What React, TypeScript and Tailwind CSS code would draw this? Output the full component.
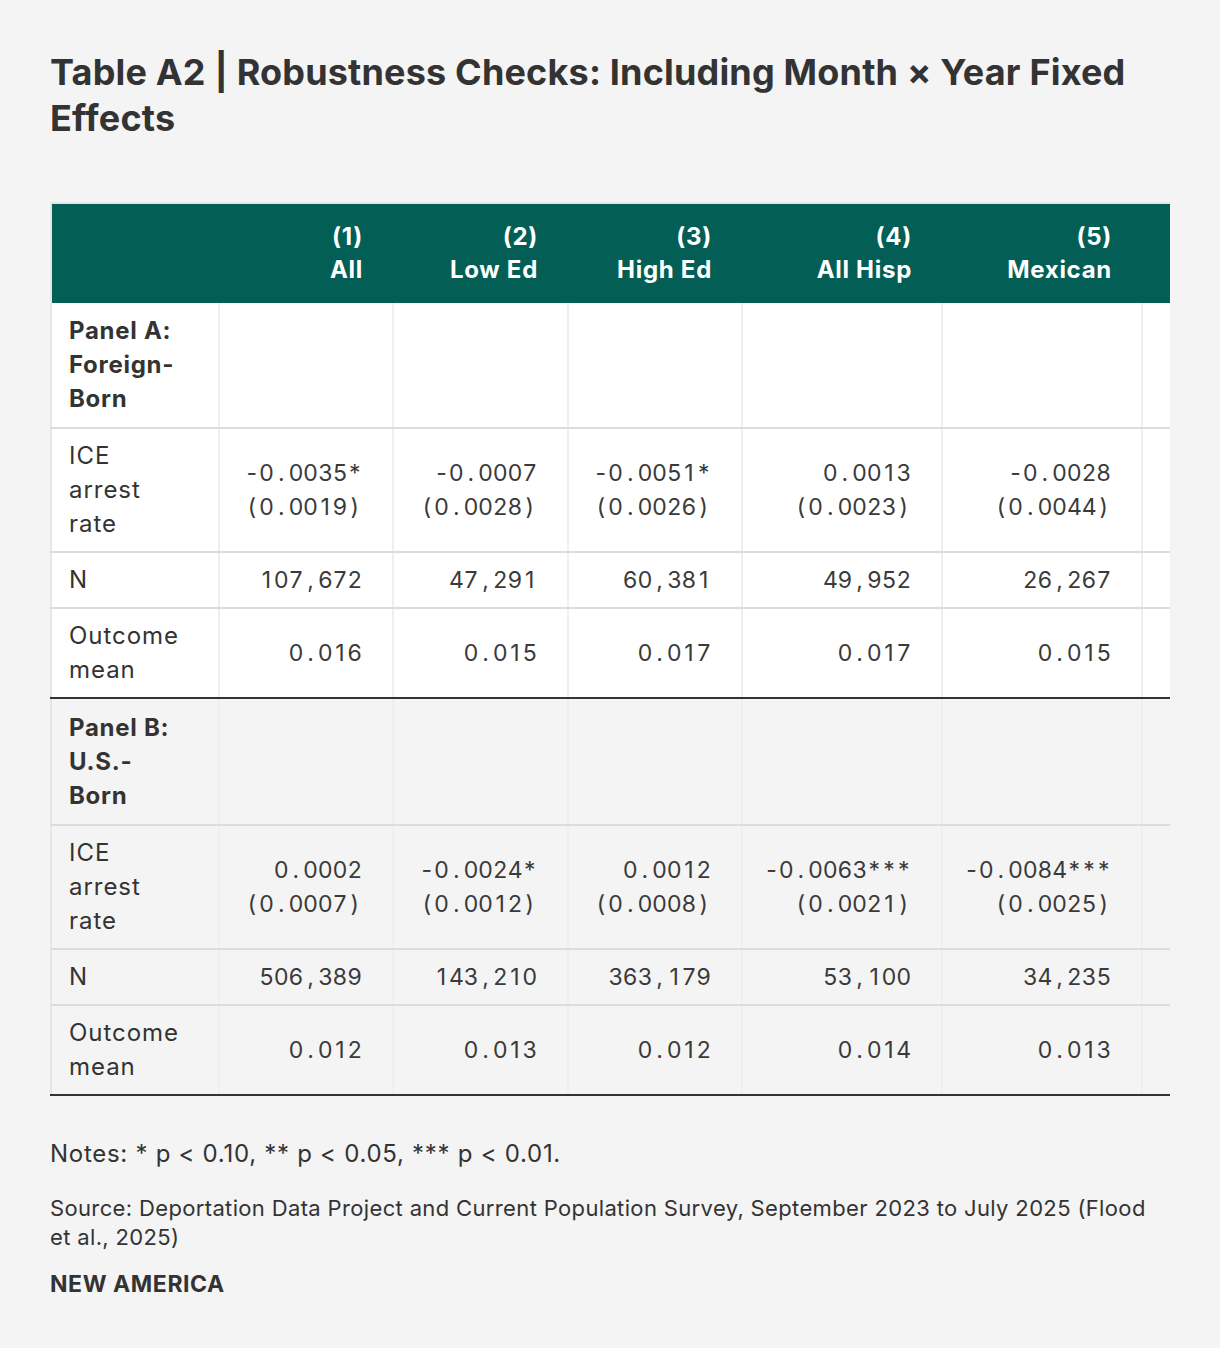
import React from "react";

const sans = "font-['Inter','Noto_Sans',sans-serif]";

type Row = { label: React.ReactNode; vals: string[][] };

function Mono({ lines }: { lines: string[] }) {
  return (
    <div className="flex flex-col items-end">
      {lines.map((l, li) => (
        <div key={li} className="flex">
          {Array.from(l).map((c, i) => (
            <span key={i} className="inline-block w-[14.7px] text-center">
              {c}
            </span>
          ))}
        </div>
      ))}
    </div>
  );
}

const panelA: Row[] = [
  {
    label: (<>ICE<br />arrest<br />rate</>),
    vals: [
      ["-0.0035*", "(0.0019)"],
      ["-0.0007", "(0.0028)"],
      ["-0.0051*", "(0.0026)"],
      ["0.0013", "(0.0023)"],
      ["-0.0028", "(0.0044)"],
    ],
  },
  { label: "N", vals: [["107,672"], ["47,291"], ["60,381"], ["49,952"], ["26,267"]] },
  { label: (<>Outcome<br />mean</>), vals: [["0.016"], ["0.015"], ["0.017"], ["0.017"], ["0.015"]] },
];

const panelB: Row[] = [
  {
    label: (<>ICE<br />arrest<br />rate</>),
    vals: [
      ["0.0002", "(0.0007)"],
      ["-0.0024*", "(0.0012)"],
      ["0.0012", "(0.0008)"],
      ["-0.0063***", "(0.0021)"],
      ["-0.0084***", "(0.0025)"],
    ],
  },
  { label: "N", vals: [["506,389"], ["143,210"], ["363,179"], ["53,100"], ["34,235"]] },
  { label: (<>Outcome<br />mean</>), vals: [["0.012"], ["0.013"], ["0.012"], ["0.014"], ["0.013"]] },
];

const headers = [
  ["(1)", "All"],
  ["(2)", "Low Ed"],
  ["(3)", "High Ed"],
  ["(4)", "All Hisp"],
  ["(5)", "Mexican"],
];

function Panel({ title, rows, bg, titlePad }: { title: React.ReactNode; rows: Row[]; bg: string; titlePad: string }) {
  return (
    <tbody className={bg}>
      <tr>
        <td className={`border-l-2 border-l-[#e6e6e6] border-r-2 border-r-[#efefef] border-b-2 border-b-[#dcdcdc] pl-[17px] pr-[10px] ${titlePad} align-top text-left font-bold leading-[34px] text-[24px] tracking-[0.03em] ${sans}`}>
          {title}
        </td>
        {[0, 1, 2, 3, 4, 5].map((i) => (
          <td key={i} className="border-r-2 border-r-[#efefef] border-b-2 border-b-[#dcdcdc]"></td>
        ))}
      </tr>
      {rows.map((r, ri) => {
        const last = ri === rows.length - 1;
        const bb = last ? "border-b-2 border-b-[#333333]" : "border-b-2 border-b-[#dcdcdc]";
        return (
          <tr key={ri}>
            <td className={`border-l-2 border-l-[#e6e6e6] border-r-2 border-r-[#efefef] ${bb} pl-[17px] pr-[10px] py-[10px] align-middle text-left leading-[34px] text-[24px] tracking-[0.04em] ${sans}`}>
              {r.label}
            </td>
            {r.vals.map((v, i) => (
              <td key={i} className={`border-r-2 border-r-[#efefef] ${bb} pl-[6px] pr-[30px] py-[10px] align-middle text-right leading-[34px] text-[23px] whitespace-nowrap text-[#3a3a3a] ${sans}`}>
                <Mono lines={v} />
              </td>
            ))}
            <td className={`border-r-2 border-r-[#efefef] ${bb}`}></td>
          </tr>
        );
      })}
    </tbody>
  );
}

export default function App() {
  return (
    <div className={`min-h-[1348px] w-full bg-[#f4f4f4] text-[#333333] ${sans}`}>
      <div className="px-[50px] pt-[49px] pb-[40px]">
        <h1 className="text-[36px] font-bold leading-[46px] tracking-[0.005em] text-[#333333]">
          Table A2 | Robustness Checks: Including Month × Year Fixed Effects
        </h1>

        <div className="mt-[61px] w-[1120px] overflow-hidden">
          <table className="table-fixed border-collapse w-[1290px]">
            <colgroup>
              <col className="w-[168px]" />
              <col className="w-[174px]" />
              <col className="w-[175px]" />
              <col className="w-[174px]" />
              <col className="w-[200px]" />
              <col className="w-[200px]" />
              <col className="w-[199px]" />
            </colgroup>
            <thead>
              <tr className="bg-[#035f56] text-white">
                <th className="border-t-2 border-t-[#e6e6e6] border-l-2 border-l-[#e6e6e6] pt-[16px] pb-[17px]"></th>
                {headers.map(([a, b], i) => (
                  <th key={i} className={`border-t-2 border-t-[#e6e6e6] pr-[30px] pt-[16px] pb-[17px] text-right font-bold text-[24px] tracking-[0.03em] leading-[33px] ${sans}`}>
                    {a}
                    <br />
                    {b}
                  </th>
                ))}
                <th className="border-t-2 border-t-[#e6e6e6]"></th>
              </tr>
            </thead>
            <Panel title={(<>Panel A:<br />Foreign-<br />Born</>)} rows={panelA} bg="bg-white" titlePad="pt-[11px] pb-[11px]" />
            <Panel title={(<>Panel B:<br />U.S.-<br />Born</>)} rows={panelB} bg="bg-[#f4f4f4]" titlePad="pt-[12px] pb-[11px]" />
          </table>
        </div>

        <p className="mt-[40px] text-[24px] leading-[36px] tracking-[0.03em]">Notes: * p &lt; 0.10, ** p &lt; 0.05, *** p &lt; 0.01.</p>
        <p className="mt-[22px] max-w-[1110px] text-[22px] leading-[29px] tracking-[0.016em]">
          Source: Deportation Data Project and Current Population Survey, September 2023 to July 2025 (Flood et al., 2025)
        </p>
        <p className="mt-[18px] text-[23px] font-bold leading-[29px] tracking-[0.025em]">NEW AMERICA</p>
      </div>
    </div>
  );
}
